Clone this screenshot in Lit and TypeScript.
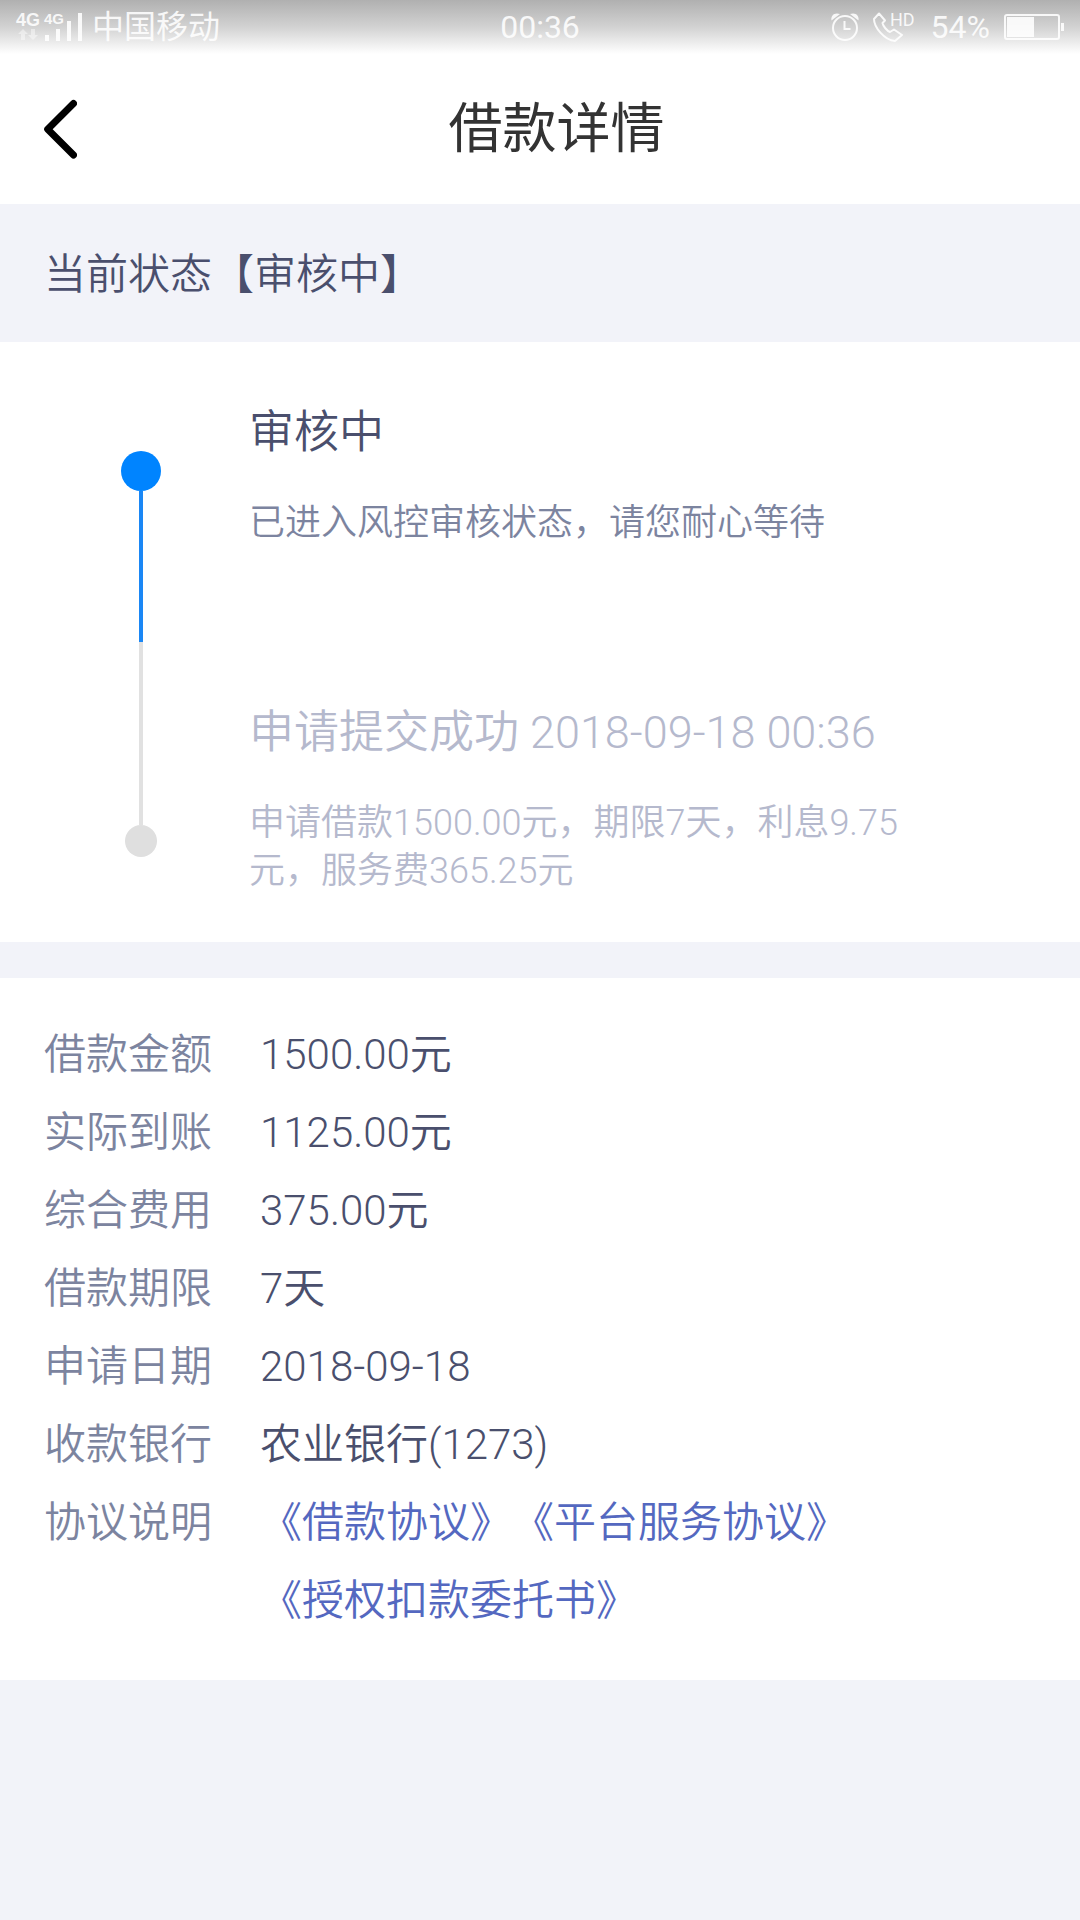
import { LitElement, html, css, nothing } from "lit";
import { customElement, property } from "lit/decorators.js";

interface Step {
  title: string;
  text: string;
  active: boolean;
}

interface Detail {
  label: string;
  value?: string;
  links?: string[];
}

const STEPS: Step[] = [
  { title: "审核中", text: "已进入风控审核状态，请您耐心等待", active: true },
  {
    title: "申请提交成功 2018-09-18 00:36",
    text: "申请借款1500.00元，期限7天，利息9.75元，服务费365.25元",
    active: false,
  },
];

const DETAILS: Detail[] = [
  { label: "借款金额", value: "1500.00元" },
  { label: "实际到账", value: "1125.00元" },
  { label: "综合费用", value: "375.00元" },
  { label: "借款期限", value: "7天" },
  { label: "申请日期", value: "2018-09-18" },
  { label: "收款银行", value: "农业银行(1273)" },
  { label: "协议说明", links: ["《借款协议》", "《平台服务协议》", "《授权扣款委托书》"] },
];

@customElement("status-bar")
export class StatusBar extends LitElement {
  static styles = css`
    :host {
      display: grid;
      grid-template-columns: 1fr auto 1fr;
      align-items: center;
      height: 54px;
      padding: 0 16px;
      box-sizing: border-box;
      background: linear-gradient(#b0b0b0, #d2d2d2 50%, #fff);
      color: rgba(255, 255, 255, 0.88);
      font-size: 32px;
      font-weight: 400;
      line-height: 54px;
    }
    .side {
      display: flex;
      align-items: center;
      gap: 10px;
    }
    .right {
      justify-content: flex-end;
      gap: 14px;
    }
    svg {
      display: block;
      flex: none;
      overflow: visible;
      fill: none;
      stroke: currentColor;
    }
    .solid {
      fill: currentColor;
      stroke: none;
    }
    .faint {
      opacity: 0.5;
    }
    .net {
      font-family: "Liberation Sans", sans-serif;
      font-size: 18px;
      font-weight: 700;
    }
    .net-small {
      font-family: "Liberation Sans", sans-serif;
      font-size: 15px;
      font-weight: 700;
    }
    .hd {
      font-size: 18px;
    }
  `;

  render() {
    return html`
      <div class="side">
        <svg width="66" height="38" viewBox="0 -4 66 38" role="img" aria-label="信号">
          <g class="solid">
            <text class="net" x="0" y="14">4G</text>
            <text class="net-small" x="28" y="12">4G</text>
            <path class="faint" d="M7 17l5 5h-3v6h-4v-6h-3zM17 28l-5-5h3v-6h4v6h3z" />
            <path d="M29 23h4v6h-4zM40 17h4v12h-4zM51 9h4v20h-4zM62 1h4v28h-4z" />
          </g>
        </svg>
        <span>中国移动</span>
      </div>
      <time>00:36</time>
      <div class="side right">
        <svg width="28" height="30" viewBox="0 0 28 30" stroke-width="2" role="img" aria-label="闹钟">
          <circle cx="14" cy="16" r="12" />
          <path d="M13.500 9v8h6" />
          <path class="solid" d="M0.500 8.500C-0.500 3 4 0 9 2zM27.500 8.500C28.500 3 24 0 19 2z" />
        </svg>
        <svg width="44" height="38" viewBox="0 -4 44 38" stroke-width="2" stroke-linejoin="round" role="img" aria-label="高清通话">
          <path d="M6 1.500L1 7C1 15 11 28 22 29L29 23L21 17.500L17 20C14 19 10 14 9.500 11L12 8.500Z" />
          <text class="hd solid" x="17" y="14">HD</text>
        </svg>
        <span>54%</span>
        <svg width="60" height="28" viewBox="0 0 60 28" role="img" aria-label="电池">
          <rect x="1" y="2" width="54" height="24" rx="2" stroke-width="2" />
          <path class="solid" d="M3 4h27v20h-27zM57 10h3v8h-3z" />
        </svg>
      </div>
    `;
  }
}

@customElement("progress-step")
export class ProgressStep extends LitElement {
  @property({ attribute: false }) step!: Step;

  static styles = css`
    :host {
      display: block;
    }
    .step {
      display: grid;
      grid-template-columns: 40px 1fr;
      column-gap: 88px;
      min-height: 300px;
      box-sizing: border-box;
      padding: 0 170px 0 121px;
      color: #b5b9cd;
    }
    .rail {
      display: flex;
      flex-direction: column;
      align-items: center;
    }
    .dot {
      width: 32px;
      height: 32px;
      border-radius: 50%;
      background: #dfdfdf;
    }
    .line {
      width: 4px;
      height: 183px;
      background: #e1e1e1;
    }
    .body {
      padding: 61px 0 45px;
    }
    .title {
      margin: 0 0 36px;
      font-size: 45px;
      font-weight: inherit;
      line-height: 60px;
    }
    .text {
      margin: 0;
      font-size: 36px;
      line-height: 48px;
    }
    .active .rail {
      padding-top: 109px;
    }
    .active .dot {
      width: 40px;
      height: 40px;
      background: #0084ff;
    }
    .active .line {
      flex: 1;
      background: #1a87f5;
    }
    .active .title {
      color: #4a4f6d;
    }
    .active .text {
      color: #7c849f;
    }
  `;

  render() {
    const { title, text, active } = this.step;
    const dot = html`<span class="dot"></span>`;
    return html`
      <div class="step ${active ? "active" : ""}">
        <div class="rail">
          ${active ? dot : nothing}<span class="line"></span>${active ? nothing : dot}
        </div>
        <div class="body">
          <h3 class="title">${title}</h3>
          <p class="text">${text}</p>
        </div>
      </div>
    `;
  }
}

@customElement("app-root")
export class AppRoot extends LitElement {
  static styles = css`
    :host {
      display: block;
      min-height: 100vh;
      background: #f2f3f9;
      color: #4a4f6d;
      font-family: Roboto, "Noto Sans CJK SC", sans-serif;
      font-weight: 350;
      font-size: 42px;
    }
    .header {
      display: flex;
      align-items: center;
      height: 150px;
      padding: 0 44px;
      background: #fff;
    }
    .back {
      display: block;
      flex: none;
      padding: 0;
      border: 0;
      background: none;
      color: #000;
      cursor: pointer;
    }
    .back svg {
      display: block;
    }
    .heading {
      flex: 1;
      margin: 0;
      padding-top: 2px;
      text-align: center;
      color: #333;
      font-size: 54px;
      font-weight: 400;
      line-height: 72px;
    }
    .state {
      margin: 0;
      padding: 4px 44px 0;
      font-size: 42px;
      font-weight: inherit;
      line-height: 134px;
    }
    .steps {
      margin: 0 0 36px;
      padding: 0;
      list-style: none;
      background: #fff;
    }
    .details {
      margin: 0;
      padding: 38px 44px 40px;
      background: #fff;
      line-height: 78px;
    }
    .row {
      display: grid;
      grid-template-columns: 168px 1fr;
      column-gap: 48px;
    }
    .label {
      color: #7c849f;
    }
    .value {
      display: flex;
      flex-wrap: wrap;
      margin: 0;
    }
    .link {
      color: #5468c0;
      text-decoration: none;
      white-space: nowrap;
    }
  `;

  render() {
    return html`
      <status-bar></status-bar>
      <header class="header">
        <button class="back" type="button" aria-label="返回">
          <svg width="33" height="60" viewBox="0 0 33 60" fill="none" stroke="currentColor" stroke-width="7" stroke-linecap="round" stroke-linejoin="round">
            <path d="M29.500 4.500L3.700 30.200L29.500 56" />
          </svg>
        </button>
        <h1 class="heading">借款详情</h1>
      </header>
      <main>
        <h2 class="state">当前状态【审核中】</h2>
        <ol class="steps">
          ${STEPS.map((step) => html`<li><progress-step .step=${step}></progress-step></li>`)}
        </ol>
        <dl class="details">
          ${DETAILS.map(
            (d) => html`
              <div class="row">
                <dt class="label">${d.label}</dt>
                <dd class="value">
                  ${d.links ? d.links.map((l) => html`<a class="link" href="#">${l}</a>`) : d.value}
                </dd>
              </div>
            `,
          )}
        </dl>
      </main>
    `;
  }
}
